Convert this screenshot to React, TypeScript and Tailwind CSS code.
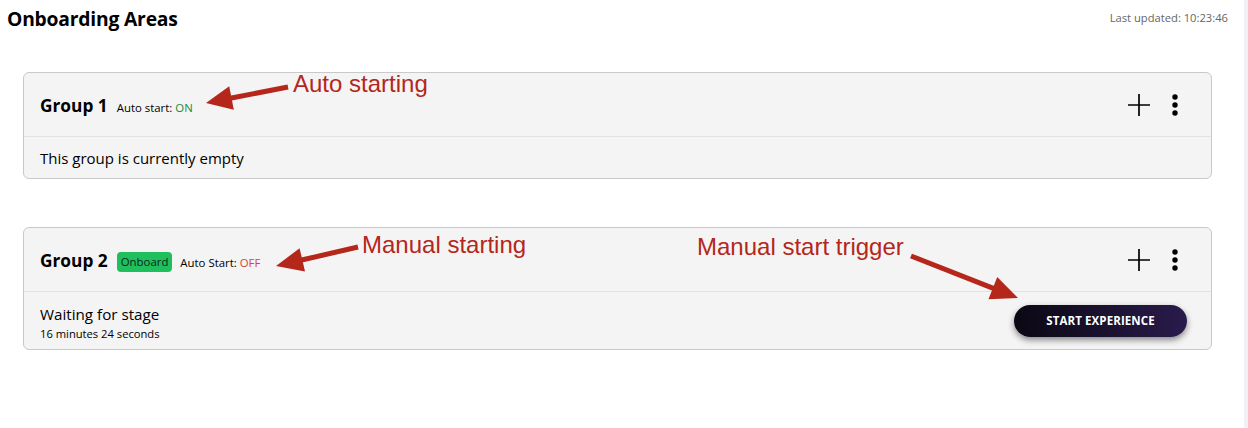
import React from "react";

type Pt = [number, number];

function Arrow({ from, tip, len, half }: { from: Pt; tip: Pt; len: number; half: number }) {
  const dx = tip[0] - from[0];
  const dy = tip[1] - from[1];
  const d = Math.hypot(dx, dy);
  const ux = dx / d;
  const uy = dy / d;
  const bx = tip[0] - ux * len;
  const by = tip[1] - uy * len;
  const px = -uy;
  const py = ux;
  const p1: Pt = [bx + px * half, by + py * half];
  const p2: Pt = [bx - px * half, by - py * half];
  const sx = tip[0] - ux * (len - 4);
  const sy = tip[1] - uy * (len - 4);
  return (
    <g>
      <line x1={from[0]} y1={from[1]} x2={sx} y2={sy} stroke="#b5261b" strokeWidth={5} />
      <polygon points={`${tip[0]},${tip[1]} ${p1[0]},${p1[1]} ${p2[0]},${p2[1]}`} fill="#b5261b" />
    </g>
  );
}

function PlusIcon() {
  return (
    <svg width="24" height="24" viewBox="0 0 24 24" className="block">
      <path d="M12 1v22M1 12h22" stroke="#000" strokeWidth="1.7" fill="none" />
    </svg>
  );
}

function DotsIcon() {
  return (
    <svg width="8" height="24" viewBox="0 0 8 24" className="block">
      <circle cx="4" cy="4" r="2.7" fill="#000" />
      <circle cx="4" cy="12" r="2.7" fill="#000" />
      <circle cx="4" cy="20" r="2.7" fill="#000" />
    </svg>
  );
}

function CardHeader({ children }: { children: React.ReactNode }) {
  return (
    <div className="flex h-[64px] items-center justify-between border-b border-[#e2e2e2] pl-[16px] pr-[32px]">
      <div className="flex items-center pt-[2px]">{children}</div>
      <div className="flex items-center gap-[20px]">
        <PlusIcon />
        <DotsIcon />
      </div>
    </div>
  );
}

export default function App() {
  const font = { fontFamily: '"Open Sans", "Noto Sans", sans-serif' };
  return (
    <div className="relative flex h-[428px] w-full overflow-hidden bg-white text-black" style={font}>
      <div className="flex flex-1 flex-col">
        <div className="flex items-start justify-between pl-[7px] pr-[16px] pt-[5px]">
          <h1 className="text-[19.3px] font-bold leading-[28px] tracking-[-0.2px]">Onboarding Areas</h1>
          <span className="pt-[5px] text-[11.2px] leading-[15px] text-[#666]">Last updated: 10:23:46</span>
        </div>

        <div className="ml-[23px] mr-[32px] mt-[39px] flex flex-col gap-[48px]">
          <div className="rounded-[6px] border border-[#c9c9c9] bg-[#f4f4f4]">
            <CardHeader>
              <span className="text-[17.3px] font-bold leading-[22px]">Group 1</span>
              <span className="ml-[9px] mt-[4px] text-[11.4px] leading-[14px]">
                Auto start: <span className="text-[#1a8a3a]">ON</span>
              </span>
            </CardHeader>
            <div className="flex h-[41px] items-center px-[16px] text-[15px] leading-[20px]">
              This group is currently empty
            </div>
          </div>

          <div className="rounded-[6px] border border-[#c9c9c9] bg-[#f4f4f4]">
            <CardHeader>
              <span className="text-[17.3px] font-bold leading-[22px]">Group 2</span>
              <span className="ml-[9px] mt-[2px] rounded-[4px] bg-[#1fbf5e] px-[4px] text-[11.4px] leading-[20px] text-[#0b2a14]">
                Onboard
              </span>
              <span className="ml-[8px] mt-[4px] text-[11.4px] leading-[14px]">
                Auto Start: <span className="text-[#d8433a]">OFF</span>
              </span>
            </CardHeader>
            <div className="flex h-[57px] items-center justify-between pl-[16px] pr-[24px]">
              <div className="flex flex-col pt-[6px]">
                <span className="text-[15.2px] leading-[20px]">Waiting for stage</span>
                <span className="text-[11.2px] leading-[20px]">16 minutes 24 seconds</span>
              </div>
              <button className="mt-[1px] h-[32px] w-[173px] rounded-full bg-gradient-to-r from-[#0b0813] to-[#2a1b4c] text-[11.5px] font-bold tracking-[0.1px] text-white shadow-[0_3px_6px_rgba(0,0,0,0.45)]">
                START EXPERIENCE
              </button>
            </div>
          </div>
        </div>
      </div>
      <div className="w-[4px] bg-[#f0f1f4]" />

      <svg className="pointer-events-none absolute left-0 top-0" width="1248" height="428">
        <Arrow from={[288, 87]} tip={[206, 103]} len={26} half={12} />
        <Arrow from={[358, 247]} tip={[276, 266]} len={27} half={12} />
        <Arrow from={[911, 256]} tip={[1018, 298]} len={27} half={12} />
      </svg>
      <div
        className="pointer-events-none absolute left-[293px] top-[72px] text-[24px] leading-[24px] text-[#b5261b]"
        style={{ fontFamily: '"Liberation Sans", Arial, sans-serif' }}
      >
        Auto starting
      </div>
      <div
        className="pointer-events-none absolute left-[362px] top-[233px] text-[24px] leading-[24px] text-[#b5261b]"
        style={{ fontFamily: '"Liberation Sans", Arial, sans-serif' }}
      >
        Manual starting
      </div>
      <div
        className="pointer-events-none absolute left-[697px] top-[235px] text-[24px] leading-[24px] text-[#b5261b]"
        style={{ fontFamily: '"Liberation Sans", Arial, sans-serif' }}
      >
        Manual start trigger
      </div>
    </div>
  );
}
